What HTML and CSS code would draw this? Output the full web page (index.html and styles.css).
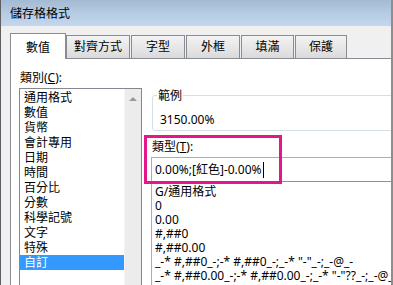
FILE: index.html
```html
<!DOCTYPE html>
<html lang="zh-Hant">
<head>
<meta charset="utf-8">
<title>儲存格格式</title>
<link rel="stylesheet" href="styles.css">
</head>
<body>
<div class="window">
  <div class="titlebar">儲存格格式</div>
  <div class="client">
    <div class="tabs">
      <div class="tab active">數值</div>
      <div class="tab w-align">對齊方式</div>
      <div class="tab w-font">字型</div>
      <div class="tab w-border">外框</div>
      <div class="tab w-fill">填滿</div>
      <div class="tab w-protect">保護</div>
    </div>
    <div class="panel">
      <div class="col-left">
        <div class="label">類別(<u>C</u>):</div>
        <div class="listbox">
          <ul class="items">
            <li>通用格式</li>
            <li>數值</li>
            <li>貨幣</li>
            <li>會計專用</li>
            <li>日期</li>
            <li>時間</li>
            <li>百分比</li>
            <li>分數</li>
            <li>科學記號</li>
            <li>文字</li>
            <li>特殊</li>
            <li class="selected">自訂</li>
          </ul>
          <div class="scrollbar"><span class="arrow-up"></span></div>
        </div>
      </div>
      <div class="col-right">
        <fieldset class="sample">
          <legend>範例</legend>
          <div class="sample-value">3150.00%</div>
        </fieldset>
        <div class="label type-label">類型(<u>T</u>):</div>
        <div class="input">0.00%;[紅色]-0.00%<span class="caret"></span></div>
        <ul class="formats">
          <li>G/通用格式</li>
          <li>0</li>
          <li>0.00</li>
          <li>#,##0</li>
          <li>#,##0.00</li>
          <li>_-* #,##0_-;-* #,##0_-;_-* "-"_-;_-@_-</li>
          <li>_-* #,##0.00_-;-* #,##0.00_-;_-* "-"??_-;_-@_-</li>
        </ul>
        <div class="highlight"></div>
      </div>
    </div>
  </div>
</div>
</body>
</html>
```

FILE: styles.css
```css
* { box-sizing: border-box; }

html, body {
  margin: 0;
  padding: 0;
  background: #f0f0f0;
}

body {
  width: 393px;
  height: 285px;
  overflow: hidden;
  font-family: "Noto Sans", "Noto Sans CJK TC", sans-serif;
  font-size: 12px;
  color: #000;
}

.window {
  width: 393px;
  height: 285px;
  overflow: hidden;
  border-left: 1px solid #5e5e5e;
  border-right: 2px solid #8e8e8e;
  background: #f0f0f0;
}

.titlebar {
  height: 26px;
  line-height: 27px;
  padding-left: 9px;
  font-size: 12px;
  background: linear-gradient(#a4bad3, #b5cbe3 50%, #c3d8ee);
  color: #000;
}

.client {
  padding: 7px 0 0 9px;
}

.tabs {
  display: flex;
  align-items: flex-start;
  height: 25px;
  gap: 1px;
}

.tab {
  height: 23px;
  margin-top: 2px;
  border: 1px solid #898c95;
  border-bottom: 0;
  background: linear-gradient(#f3f3f3, #e7e7e7 50%, #dadada);
  text-align: center;
  line-height: 21px;
  font-size: 12px;
}

.tab.active {
  position: relative;
  z-index: 1;
  width: 56px;
  height: 26px;
  margin-top: 0;
  margin-right: -1px;
  background: #fff;
  line-height: 27px;
}

.w-align { width: 64px; }
.w-font { width: 54px; }
.w-border { width: 54px; }
.w-fill { width: 53px; }
.w-protect { width: 52px; }

.panel {
  display: flex;
  gap: 9px;
  width: 440px;
  height: 240px;
  padding: 11px 0 0 8px;
  background: #fff;
  border: 1px solid #898c95;
}

.label {
  line-height: 15px;
  height: 15px;
}

.label u {
  text-decoration: underline;
  text-underline-offset: 1px;
}

.col-left {
  width: 123px;
  flex: none;
}

.col-left .label {
  padding-left: 1px;
  margin-bottom: 3px;
}

.listbox {
  display: flex;
  height: 198px;
  border: 1px solid #828790;
}

.items {
  flex: 1;
  margin: 0;
  padding: 1px 0 0 0;
  list-style: none;
}

.items li {
  height: 15px;
  line-height: 15px;
  padding-left: 4px;
  white-space: nowrap;
}

.items li.selected {
  background: #3399ff;
  color: #fff;
}

.scrollbar {
  width: 17px;
  flex: none;
  background: #ececec;
  border-left: 1px solid #f4f4f4;
  display: flex;
  justify-content: center;
  padding-top: 8px;
}

.arrow-up {
  width: 0;
  height: 0;
  border-left: 4px solid transparent;
  border-right: 4px solid transparent;
  border-bottom: 4px solid #9a9a9a;
}

.col-right {
  position: relative;
  width: 270px;
  flex: none;
}

.sample {
  margin: 18px 0 0 1px;
  padding: 0 0 3px 4px;
  border: 1px solid #d5dfe5;
  border-radius: 3px;
  min-width: 0;
}

.sample legend {
  padding: 0 1px;
  line-height: 15px;
}

.sample-value {
  margin-top: 9px;
  padding-left: 3px;
  line-height: 15px;
}

.type-label {
  margin-top: 8px;
  margin-bottom: 3px;
  padding-left: 1px;
}

.input {
  position: relative;
  height: 25px;
  padding: 4px 3px;
  line-height: 15px;
  border: 1px solid #abadb3;
  border-bottom-color: #8f9195;
  white-space: nowrap;
}

.caret {
  display: inline-block;
  width: 1px;
  height: 16px;
  margin-left: 1px;
  vertical-align: -4px;
  background: #000;
}

.formats {
  margin: 0;
  padding: 3px 0 0 3px;
  list-style: none;
  border-left: 1px solid #abadb3;
  height: 120px;
}

.formats li {
  height: 14px;
  line-height: 14px;
  white-space: nowrap;
}

.highlight {
  position: absolute;
  left: -7px;
  top: 65px;
  width: 138px;
  height: 49px;
  border: 3px solid #e4168a;
  pointer-events: none;
}
```
